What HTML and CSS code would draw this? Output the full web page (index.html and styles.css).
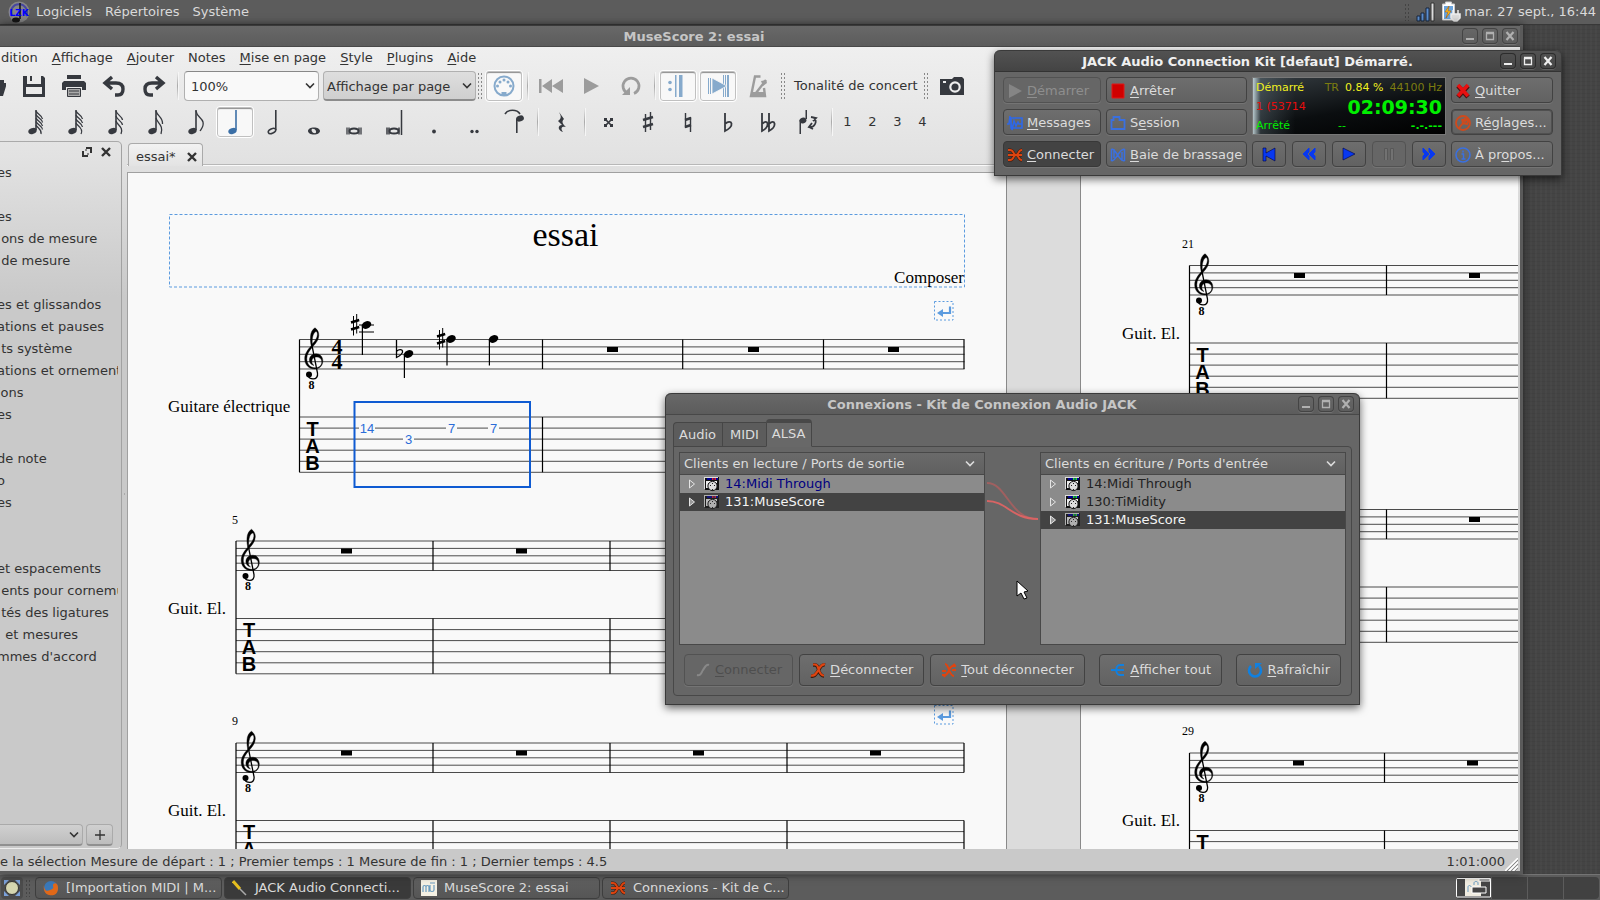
FILE: index.html
```html
<!DOCTYPE html>
<html lang="fr">

<head>
	<meta charset="UTF-8">
	<meta name="viewport" content="width=device-width, initial-scale=1.0">
	<title>MuseScore 2: essai</title>
	<link rel="stylesheet" href="styles.css">
</head>

<body>
	<!-- icones partagees -->
	<svg class="sprite" aria-hidden="true">
		<symbol id="i-min" viewBox="0 0 16 16"><path d="M4 11h8" stroke="currentColor" stroke-width="2" /></symbol>
		<symbol id="i-max" viewBox="0 0 16 16"><path d="M4.5 5.5h7v6h-7zM4 4.5h8" fill="none" stroke="currentColor" stroke-width="1.3" /></symbol>
		<symbol id="i-close" viewBox="0 0 16 16"><path d="M4.5 4l7 8M11.5 4l-7 8" fill="none" stroke="currentColor" stroke-width="2.2" /></symbol>
		<symbol id="i-down" viewBox="0 0 10 10"><path d="M1 2.5l4 4 4-4" fill="none" stroke="currentColor" stroke-width="1.6" /></symbol>
		<symbol id="i-head" viewBox="0 0 24 28"><ellipse cx="8.5" cy="23" rx="4.3" ry="2.9" transform="rotate(-20 8.5 23)" /><path d="M11.2 2h1.6v20h-1.6z" /></symbol>
		<symbol id="i-break" viewBox="0 0 20 20"><rect x=".5" y=".5" width="18.5" height="18.5" fill="none" stroke="#5b9bdf" stroke-dasharray="2 2" /><path d="M16 5.5v6.5H9" fill="none" stroke="#5b9bdf" stroke-width="2.2" /><path d="M3 12l6-4v8z" fill="#5b9bdf" /></symbol>
		<symbol id="i-alsa-out" viewBox="0 0 16 16"><path d="M1 1h14v13H1z" fill="#111" /><path d="M1 1h13v1H1v11H0V1z" fill="#ddd" /><path d="M3 2h11v2H3z" fill="#000090" /><path d="M8 2h1.500v2H8zM10.500 2H12v2h-1.500z" fill="#e02020" /><path d="M2 5h11v2H2zM2 7h2v5H2z" fill="#eee" /><circle cx="8.500" cy="10" r="4.600" fill="#ddd" stroke="#111" /><path d="M6 9h1v1H6zM8 7h1v1H8zM10 9h1v1h-1zM8 13h1v2H8z" fill="#222" /></symbol>
		<symbol id="i-alsa-in" viewBox="0 0 16 16"><path d="M1 1h14v13H1z" fill="#111" /><path d="M1 1h13v1H1v11H0V1z" fill="#ddd" /><path d="M3 2h11v2H3z" fill="#000090" /><path d="M8 2h1.500v2H8zM10.500 2H12v2h-1.500z" fill="#20e020" /><path d="M2 5h11v2H2zM2 7h2v5H2z" fill="#eee" /><circle cx="8.500" cy="10" r="4.600" fill="#ddd" stroke="#111" /><path d="M6 9h1v1H6zM8 7h1v1H8zM10 9h1v1h-1zM8 13h1v2H8z" fill="#222" /></symbol>
		<symbol id="i-x" viewBox="0 0 16 16"><path d="M1 14c4 1 5-2 7-5s3-7 7-6M3 3h2c3 0 3 3 4 6s2 5 5 5" fill="none" stroke="#3a1a0c" stroke-width="3.4" /><path d="M1 13.500c4 1 5-2 7-5s3-7 7-6M3 2.500h2c3 0 3 3 4 6s2 5 5 5" fill="none" stroke="#e04410" stroke-width="2.200" /></symbol>
		<symbol id="i-jack" viewBox="0 0 16 16"><path d="M1 3h2c4 0 3 5 6 5h6M1 13h2c4 0 3-5 6-5M1 8h8c3 0 2-5 6-5M9 8c3 0 2 5 6 5" fill="none" stroke="#40180a" stroke-width="3" /><path d="M1 3h2c4 0 3 5 6 5h6M1 13h2c4 0 3-5 6-5M1 8h8c3 0 2-5 6-5M9 8c3 0 2 5 6 5" fill="none" stroke="#dd4410" stroke-width="1.8" /></symbol>
	</svg>

	<header class="panel panel-top">
		<svg class="logo" width="22" height="22" viewBox="0 0 22 22">
			<circle cx="11" cy="11" r="10.5" fill="#858585" />
			<path d="M4 15A8 8 0 1 1 18 15" fill="none" stroke="#4646a0" stroke-width="2" />
			<path d="M12 2v16" stroke="#111" stroke-width="1.5" />
			<ellipse cx="8" cy="19" rx="4" ry="2.5" fill="#111" />
			<text x="11" y="15" class="logo-text">LZK</text>
		</svg>
		<nav class="panel-menu">
			<a href="#">Logiciels</a>
			<a href="#">Répertoires</a>
			<a href="#">Système</a>
		</nav>
		<span class="grip"></span>
		<svg class="tray" width="19" height="22" viewBox="0 0 19 22">
			<path d="M1 15h3v5H1zM5 12h3v8H5zM10 7h3v13h-3z" fill="#5d8fd0" stroke="#16243c" />
			<path d="M15 2h3v18h-3z" fill="#ddd" stroke="#333" />
		</svg>
		<svg class="tray" width="20" height="22" viewBox="0 0 20 22">
			<path d="M1.5 3h3V1h6v2h3v16h-12z" fill="#fff" stroke="#ccc" />
			<path d="M3 5h9v13H3z" fill="#6aa3dc" />
			<path d="M8 5l-4 6h3l-2 6 5-7H7z" fill="#ffc020" stroke="#b06000" stroke-width=".6" />
			<path d="M12 9v4M17 9v4M10 13h9v4l-3 3h-3l-3-3z" fill="#ddd" stroke="#eee" stroke-width="1.5" />
		</svg>
		<time class="clock">mar. 27 sept., 16:44</time>
	</header>

	<main class="desktop">
		<section class="musescore">
			<div class="title-bar">
				<h1 class="title">MuseScore 2: essai</h1>
				<div class="win-btns">
					<button aria-label="Réduire"><svg><use href="#i-min" /></svg></button>
					<button aria-label="Agrandir"><svg><use href="#i-max" /></svg></button>
					<button aria-label="Fermer"><svg><use href="#i-close" /></svg></button>
				</div>
			</div>
			<div class="app">
				<nav class="menu">
					<a href="#">dition</a>
					<a href="#"><u>A</u>ffichage</a>
					<a href="#"><u>A</u>jouter</a>
					<a href="#">Notes</a>
					<a href="#"><u>M</u>ise en page</a>
					<a href="#"><u>S</u>tyle</a>
					<a href="#"><u>P</u>lugins</a>
					<a href="#"><u>A</u>ide</a>
				</nav>

				<div class="toolbar toolbar-file">
					<button class="tool" aria-label="Ouvrir"><svg width="24" height="24" viewBox="0 0 24 24"><path d="M1 3h8l2 3h11v3h3l-4 13H1z" /></svg></button>
					<button class="tool" aria-label="Enregistrer"><svg width="24" height="24" viewBox="0 0 24 24"><path d="M1 2h4v8h14V2h2l2 2v19H1zM4 13v7h16v-7z" fill-rule="evenodd" /><path d="M8 2h2v5H8z" /></svg></button>
					<button class="tool" aria-label="Imprimer"><svg width="24" height="24" viewBox="0 0 24 24"><path d="M5 1h14v4H5zM2 7h20l2 2v7h-4v-3H4v3H0V9z" /><path d="M5.5 14.5h13v8h-13z" fill="#aaa" stroke="#36393f" /><path d="M7 17h10M7 20h10" stroke="#36393f" /></svg></button>
					<button class="tool" aria-label="Annuler"><svg width="24" height="24" viewBox="0 0 24 24"><path d="M10 3L3 9l7 6M4 9h10c5 0 7 2 7 6s-2 6-5 6h-3" fill="none" stroke="#36393f" stroke-width="3.4" /></svg></button>
					<button class="tool" aria-label="Refaire"><svg width="24" height="24" viewBox="0 0 24 24"><path d="M14 3l7 6-7 6M20 9H10c-5 0-7 2-7 6s2 6 5 6h3" fill="none" stroke="#36393f" stroke-width="3.4" /></svg></button>
					<span class="sep"></span>
					<label class="combo combo-zoom"><select aria-label="Zoom"><option>100%</option></select><svg><use href="#i-down" /></svg></label>
					<label class="combo combo-view"><select aria-label="Affichage"><option>Affichage par page</option></select><svg><use href="#i-down" /></svg></label>
					<span class="handle"></span>
					<button class="tool on" aria-label="Entrée MIDI"><svg width="24" height="24" viewBox="0 0 24 24" fill="#86aacc"><circle cx="12" cy="12" r="9.5" fill="none" stroke="#86aacc" stroke-width="2" /><circle cx="5.5" cy="12" r="1.5" /><circle cx="8" cy="8" r="1.5" /><circle cx="12" cy="6" r="1.5" /><circle cx="16" cy="8" r="1.5" /><circle cx="18.5" cy="12" r="1.5" /><path d="M9.5 18h5v4h-5z" /></svg></button>
					<span class="sep"></span>
					<button class="tool off" aria-label="Début"><svg width="24" height="24" viewBox="0 0 24 24"><path d="M0 5h2.5v14H0zM13 5v14L3 12zM24 5v14l-11-7z" /></svg></button>
					<button class="tool off" aria-label="Lecture"><svg width="24" height="24" viewBox="0 0 24 24"><path d="M5 4l15 8-15 8z" /></svg></button>
					<button class="tool off" aria-label="Boucle"><svg width="24" height="24" viewBox="0 0 24 24"><path d="M9 19.5a8 8 0 1 1 6 0" fill="none" stroke="#9c9c9c" stroke-width="2.8" /><path d="M3 21h8v-8z" /></svg></button>
					<span class="sep"></span>
					<button class="tool on" aria-label="Reprises"><svg width="24" height="24" viewBox="0 0 24 24" fill="#86aacc"><path d="M9 1h1.5v22H9zM13 1h3.5v22H13z" /><circle cx="4" cy="8.5" r="1.8" /><circle cx="4" cy="15.5" r="1.8" /></svg></button>
					<button class="tool on" aria-label="Défilement"><svg width="24" height="24" viewBox="0 0 24 24" fill="#86aacc"><path d="M2 4h1v16H2zM4 4h1v16H4zM17 1h1v22h-1zM19 1h1v22h-1zM21 1h2v22h-2z" /><path d="M6 4l15 8-15 8z" stroke="#f8f8f8" stroke-width=".8" /></svg></button>
					<button class="tool off" aria-label="Métronome"><svg width="24" height="24" viewBox="0 0 24 24"><path d="M14.5 2.5H9L5 22h14l-1-8M10 19l10-13" fill="none" stroke="#9c9c9c" stroke-width="2.4" /><path d="M15 7l5-1 1 3-4 3zM6 18h12v4H6z" /></svg></button>
					<span class="handle handle-wide"></span>
					<button class="tool-text">Tonalité de concert</button>
					<span class="handle handle-wide"></span>
					<button class="tool" aria-label="Capture"><svg width="24" height="20" viewBox="0 0 24 20"><path d="M1 3h11l2-2h8l2 2v16H0V3z" /><circle cx="15" cy="11" r="4.7" fill="none" stroke="#eee" stroke-width="2.2" /><path d="M3 5h3v2H3z" fill="#eee" /></svg></button>
				</div>

				<div class="toolbar toolbar-notes">
					<button class="tool" aria-label="Quintuple croche"><svg class="note" viewBox="0 0 24 28"><use href="#i-head" /><path class="flag" d="M12 3c1 3 6 4 6.500 8M12 6.500c1 3 6 4 6.500 8M12 10c1 3 6 4 6.500 8M12 13.500c1 3 6 4 6.500 8M12 17c1 3 6 4 5 9" /></svg></button>
					<button class="tool" aria-label="Quadruple croche"><svg class="note" viewBox="0 0 24 28"><use href="#i-head" /><path class="flag" d="M12 3c1 3 6 4 6.500 8M12 7c1 3 6 4 6.500 8M12 11c1 3 6 4 6.500 8M12 15c1 3 8 5 5 11" /></svg></button>
					<button class="tool" aria-label="Triple croche"><svg class="note" viewBox="0 0 24 28"><use href="#i-head" /><path class="flag" d="M12 3c1 4 6 5 6.500 9M12 8c1 4 6 5 6.500 9M12 13c1 4 8 6 5 13" /></svg></button>
					<button class="tool" aria-label="Double croche"><svg class="note" viewBox="0 0 24 28"><use href="#i-head" /><path class="flag" d="M12 3c1 5 7 6 6.500 13M12 10c1 5 8 7 5 16" /></svg></button>
					<button class="tool" aria-label="Croche"><svg class="note" viewBox="0 0 24 28"><use href="#i-head" /><path class="flag" d="M12 3c1 6 6 7 7 11s-1 6-3 9" /></svg></button>
					<button class="tool on blue" aria-label="Noire"><svg class="note" viewBox="0 0 24 28"><use href="#i-head" x="1" /></svg></button>
					<button class="tool" aria-label="Blanche"><svg class="note" viewBox="0 0 24 28"><ellipse cx="10" cy="23" rx="4" ry="2.2" transform="rotate(-25 10 23)" fill="none" stroke="#36393f" stroke-width="1.5" /><path d="M13 2h1.600v20H13z" /></svg></button>
					<button class="tool" aria-label="Ronde"><svg class="note" viewBox="0 0 24 28"><path fill-rule="evenodd" d="M12 19.500c3.500 0 6 1.600 6 3.500s-2.500 3.500-6 3.500-6-1.600-6-3.500 2.500-3.500 6-3.500zm-1.500 1.200c-2 .6-.5 4.500 2.500 4.500 2.500-.6.5-4.800-2.500-4.500z" /></svg></button>
					<button class="tool" aria-label="Brève"><svg class="note" viewBox="0 0 24 28"><ellipse cx="12" cy="23" rx="4.5" ry="2.6" fill="none" stroke="#36393f" stroke-width="2" /><path d="M5 19.500v7M7 19.500v7M17 19.500v7M19 19.500v7" stroke="#36393f" stroke-width="1.3" /></svg></button>
					<button class="tool" aria-label="Longue"><svg class="note" viewBox="0 0 24 28"><ellipse cx="12" cy="23" rx="4.5" ry="2.6" fill="none" stroke="#36393f" stroke-width="2" /><path d="M5 19.500v7M7 19.500v7M17 19.500v7M19.500 2v25" stroke="#36393f" stroke-width="1.5" /></svg></button>
					<button class="tool" aria-label="Point"><svg class="note" viewBox="0 0 24 28"><circle cx="12" cy="23.5" r="1.9" /></svg></button>
					<button class="tool" aria-label="Double point"><svg class="note" viewBox="0 0 24 28"><circle cx="10" cy="23.5" r="1.7" /><circle cx="15" cy="23.5" r="1.7" /></svg></button>
					<button class="tool" aria-label="Liaison"><svg class="note" viewBox="0 0 24 28"><path d="M3 6c3-5 12-5 15 0" fill="none" stroke="#36393f" stroke-width="1.6" /><ellipse cx="18" cy="10.5" rx="4" ry="2.9" transform="rotate(-20 18 10.500)" /><path d="M14 11h1.600v14H14z" /></svg></button>
					<span class="sep"></span>
					<button class="tool" aria-label="Silence"><svg class="note" viewBox="0 0 24 28"><path d="M10 4l5 7c-3 3-1 5 2 8-4-1-6 1-3 5-6-2-5-7-1-7l-4-4c4-3 3-5 1-9z" /></svg></button>
					<span class="sep"></span>
					<button class="tool" aria-label="Double dièse"><svg class="note" viewBox="0 0 24 28"><path d="M9 11l7 7M16 11l-7 7" stroke="#36393f" stroke-width="1.7" /><path d="M8 10h3v3H8zM14 10h3v3h-3zM8 16h3v3H8zM14 16h3v3h-3z" /></svg></button>
					<button class="tool" aria-label="Dièse"><svg class="note" viewBox="0 0 24 28"><path d="M9.500 6v18M14.500 4v18" stroke="#36393f" stroke-width="1.4" /><path d="M7 12l10-3M7 19l10-3" stroke="#36393f" stroke-width="2.6" /></svg></button>
					<button class="tool" aria-label="Bécarre"><svg class="note" viewBox="0 0 24 28"><path d="M9.500 5v15M14.500 9v15" stroke="#36393f" stroke-width="1.4" /><path d="M9 12l6-2M9 19l6-2" stroke="#36393f" stroke-width="2.6" /></svg></button>
					<button class="tool" aria-label="Bémol"><svg class="note" viewBox="0 0 24 28"><path d="M9 5v18c4-2 7-4 6.500-7.500-.5-2.500-4-2-6 0" fill="none" stroke="#36393f" stroke-width="1.8" /></svg></button>
					<button class="tool" aria-label="Double bémol"><svg class="note" viewBox="0 0 24 28"><path d="M6 5v18c4-2 6-4 5.500-7.500-.5-2.500-3-2-5 0M13 5v18c4-2 6-4 5.500-7.500-.5-2.500-3-2-5 0" fill="none" stroke="#36393f" stroke-width="1.8" /></svg></button>
					<button class="tool" aria-label="Inverser"><svg class="note" viewBox="0 0 24 28"><ellipse cx="7" cy="12.5" rx="3.5" ry="2.8" transform="rotate(-20 7 12.500)" /><path d="M3.500 12H5v14H3.500zM9.500 2H11v9H9.500z" /><path d="M15 9l5 1-3 3M18 10c4 4 0 10-5 9l3-4M13 19l4 2" fill="none" stroke="#36393f" stroke-width="1.8" /></svg></button>
					<span class="sep"></span>
					<button class="voice">1</button>
					<button class="voice">2</button>
					<button class="voice">3</button>
					<button class="voice">4</button>
				</div>

				<div class="work">
					<aside class="palettes">
						<div class="dock-head">
							<button aria-label="Détacher"><svg viewBox="0 0 10 10"><path d="M4 1h5v5M1 4v5h5" fill="none" stroke="currentColor" stroke-width="2" /><path d="M3 3h2M5 7h2" stroke="currentColor" /></svg></button>
							<button aria-label="Fermer les palettes"><svg viewBox="0 0 10 10"><path d="M1 1l8 8M9 1L1 9" stroke="currentColor" stroke-width="2.4" /></svg></button>
						</div>
						<ul class="palette-list">
							<li>es</li>
							<li></li>
							<li>es</li>
							<li>&nbsp;ons de mesure</li>
							<li>&nbsp;de mesure</li>
							<li></li>
							<li>es et glissandos</li>
							<li>ations et pauses</li>
							<li>&nbsp;ts système</li>
							<li>ations et ornement</li>
							<li>ions</li>
							<li>es</li>
							<li></li>
							<li>de note</li>
							<li>o</li>
							<li>es</li>
							<li></li>
							<li></li>
							<li>et espacements</li>
							<li>&nbsp;ents pour cornemu</li>
							<li>&nbsp;tés des ligatures</li>
							<li>&nbsp;&nbsp;et mesures</li>
							<li>mmes d'accord</li>
						</ul>
						<div class="dock-foot">
							<label class="combo combo-space"><select aria-label="Espace de travail"><option></option></select><svg><use href="#i-down" /></svg></label>
							<button class="add" aria-label="Ajouter un espace"><svg viewBox="0 0 10 10"><path d="M5 0v10M0 5h10" stroke="currentColor" stroke-width="1.3" /></svg></button>
						</div>
					</aside>
					<div class="splitter"></div>
					<div class="document">
						<div class="doc-tabs">
							<div class="doc-tab">essai*<button aria-label="Fermer essai"><svg viewBox="0 0 10 10"><path d="M1 1l8 8M9 1L1 9" stroke="currentColor" stroke-width="2.4" /></svg></button></div>
						</div>
						<div class="canvas">
							<svg class="score" width="1390" height="676" viewBox="128 173 1390 676">
								<defs>
									<path id="staff" d="M0 0h728M0 7.4h728M0 14.8h728M0 22.2h728M0 29.5h728M0 77.5h728M0 88.6h728M0 99.6h728M0 110.7h728M0 121.8h728M0 132.8h728" />
									<path id="bar" d="M0 0v29.5M0 77.5v55.3" />
									<path id="rest" d="M-5.5 7.5h11v5h-11z" />
									<g id="clef">
										<path d="M0 0v132.8" class="bar" />
										<g transform="translate(5 -12)">
											<path fill-rule="evenodd" stroke="#000" stroke-width=".4" d="M10.500.3C13 2 14.500 5 14.300 8c-.3 5-3.300 8-6.300 11.500C4.500 23.500 2.300 27 2.300 31c0 5.500 3.200 9.300 8.200 9.300 4 0 6.800-2.300 6.800-5.800 0-3.200-2.300-5-5.300-5s-4.700 2-4.700 4.300c0 1.700.7 3.200 2.200 4.200-3-.7-4.600-2.700-4.600-5.500 0-3.500 2.900-6.300 6.600-6.300 4.100 0 6.800 3 6.800 7.100 0 5-3.300 8.200-8 8.200C4 41.500.2 37 .2 31.200.2 26 3.500 22 6.700 18.300 6 15 5.800 12 6 9c.2-4 1.800-7 4.500-8.700zM11.500 4C9 5 7.300 9.500 7.800 16.500c2.700-3 5-6 5.100-9.200C13 5.500 12.500 4 11.500 4z" />
											<path d="M7.300 17L13 45.500c.6 4-1.500 6-4.500 5.900-2 0-3.800-.8-4.500-2.400" fill="none" stroke="#000" stroke-width="1.3" />
											<circle cx="4.5" cy="47" r="3" />
										</g>
										<text x="12" y="49" class="eight">8</text>
										<g class="tab-letters"><text x="13" y="96">T</text><text x="13" y="113">A</text><text x="13" y="130">B</text></g>
									</g>
									<g id="sharp"><path d="M2.500 2v19.500M5.700 0v19.500" stroke="#000" /><path d="M0 8.500l8.200-2.500M0 15.500L8.200 13" stroke="#000" stroke-width="2.4" /></g>
									<ellipse id="notehead" rx="5" ry="3.6" />
								</defs>

								<rect x="120" y="160" width="886.5" height="700" class="page" />
								<rect x="1080.5" y="160" width="500" height="700" class="page" />

								<!-- cadre du titre -->
								<rect x="169.5" y="214.5" width="795" height="72.5" class="frame" />
								<text x="565.5" y="246" class="score-title">essai</text>
								<text x="964" y="283" class="composer">Composer</text>
								<use href="#i-break" x="934" y="301" width="20" height="20" />
								<use href="#i-break" x="934" y="705" width="20" height="20" />

								<!-- page 1 -->
								<path class="line" d="M299.5 339.5h665m-665 7.4h665m-665 7.4h665m-665 7.4h665m-665 7.3h665M299.5 417h665m-665 11.1h665m-665 11h665m-665 11.1h665m-665 11.1h665m-665 11h665" />
								<use href="#clef" x="299.5" y="339.5" />
								<g class="timesig"><text x="337" y="354">4</text><text x="337" y="369">4</text></g>
								<g class="bar">
									<use href="#bar" x="542.5" y="339.5" /><use href="#bar" x="682.7" y="339.5" /><use href="#bar" x="823.5" y="339.5" /><use href="#bar" x="964" y="339.5" />
									<path d="M359 325h15M359 332h15M362.400 325v30M404.400 354v24M447 340v25.500M489.400 340v25.500" />
								</g>
								<use href="#notehead" transform="translate(366.5 325) rotate(-25)" />
								<use href="#notehead" transform="translate(408.5 354) rotate(-25)" />
								<use href="#notehead" transform="translate(451 339) rotate(-25)" />
								<use href="#notehead" transform="translate(493.5 339) rotate(-25)" />
								<use href="#sharp" x="351" y="314" /><use href="#sharp" x="437" y="328" />
								<path d="M396.500 340v17.500c4-2 6.500-4.500 6-6.500s-4-1.500-5.500 0" fill="none" stroke="#000" stroke-width="1.3" />
								<use href="#rest" x="612.5" y="339.5" /><use href="#rest" x="753.5" y="339.5" /><use href="#rest" x="893.5" y="339.5" />
								<path d="M359 423h16v10h-16zM403 434h11v10h-11zM446 423h11v10h-11zM488 423h11v10h-11z" fill="#f9f9f9" />
								<g class="frets"><text x="367" y="433">14</text><text x="408.5" y="444">3</text><text x="451.5" y="433">7</text><text x="493.5" y="433">7</text></g>
								<rect x="354.5" y="402" width="175.5" height="85" class="selection" />
								<text x="168" y="412" class="part">Guitare électrique</text>

								<use href="#staff" x="236" y="541" class="line" /><use href="#clef" x="236" y="541" />
								<g class="bar"><use href="#bar" x="433" y="541" /><use href="#bar" x="610" y="541" /><use href="#bar" x="787" y="541" /><use href="#bar" x="964" y="541" /></g>
								<use href="#rest" x="346.5" y="541" /><use href="#rest" x="521.5" y="541" />
								<text x="232" y="524" class="number">5</text>
								<text x="168" y="614" class="part">Guit. El.</text>

								<use href="#staff" x="236" y="743" class="line" /><use href="#clef" x="236" y="743" />
								<g class="bar"><use href="#bar" x="433" y="743" /><use href="#bar" x="610" y="743" /><use href="#bar" x="787" y="743" /><use href="#bar" x="964" y="743" /></g>
								<use href="#rest" x="346.5" y="743" /><use href="#rest" x="521.5" y="743" /><use href="#rest" x="698.5" y="743" /><use href="#rest" x="875.5" y="743" />
								<text x="232" y="725" class="number">9</text>
								<text x="168" y="816" class="part">Guit. El.</text>

								<!-- page 2 -->
								<use href="#staff" x="1189.5" y="265.5" class="line" /><use href="#clef" x="1189.5" y="265.5" />
								<use href="#bar" x="1386.5" y="265.5" class="bar" />
								<use href="#rest" x="1299.5" y="265.5" /><use href="#rest" x="1474.5" y="265.5" />
								<text x="1182" y="248" class="number">21</text>
								<text x="1122" y="339" class="part">Guit. El.</text>

								<use href="#staff" x="1189.5" y="509.5" class="line" />
								<use href="#bar" x="1386.5" y="509.5" class="bar" />
								<use href="#rest" x="1474.5" y="509.5" />

								<use href="#staff" x="1189.5" y="753" class="line" /><use href="#clef" x="1189.5" y="753" />
								<use href="#bar" x="1384.5" y="753" class="bar" />
								<use href="#rest" x="1298.5" y="753" /><use href="#rest" x="1472.5" y="753" />
								<text x="1182" y="735" class="number">29</text>
								<text x="1122" y="826" class="part">Guit. El.</text>
							</svg>
						</div>
					</div>
				</div>

				<footer class="status">
					<span>e la sélection Mesure de départ : 1 ; Premier temps : 1 Mesure de fin : 1 ; Dernier temps : 4.5</span>
					<span class="position">1:01:000</span>
					<svg class="resize" width="13" height="13" viewBox="0 0 13 13"><path d="M0 13L13 0M4 13l9-9M8 13l5-5" stroke="#fff" stroke-width="1.5" /><path d="M2 13L13 2M6 13l7-7M10 13l3-3" stroke="#888" /></svg>
				</footer>
			</div>
		</section>

		<section class="window jack">
			<div class="title-bar active">
				<h2 class="title">JACK Audio Connection Kit [defaut] Démarré.</h2>
				<div class="win-btns">
					<button aria-label="Réduire"><svg><use href="#i-min" /></svg></button>
					<button aria-label="Agrandir"><svg><use href="#i-max" /></svg></button>
					<button aria-label="Fermer"><svg><use href="#i-close" /></svg></button>
				</div>
			</div>
			<div class="jack-grid">
				<button class="btn" disabled><svg viewBox="0 0 16 16"><path d="M2 1l13 7-13 7z" fill="#858585" /></svg><span><u>D</u>émarrer</span></button>
				<button class="btn"><svg viewBox="0 0 16 16"><path d="M2 1h12v14H2z" fill="#d00000" stroke="#e01818" /></svg><span><u>A</u>rrêter</span></button>
				<div class="display">
					<div class="display-row"><span class="yellow">Démarré</span><span class="dim push">TR</span><span class="yellow">0.84 %</span><span class="dim">44100 Hz</span></div>
					<div class="display-row"><span class="red">1 (53714</span><strong class="time push">02:09:30</strong></div>
					<div class="display-row"><span>Arrêté</span><span class="bbt">--</span><strong class="push">-.-.---</strong></div>
				</div>
				<button class="btn"><svg viewBox="0 0 16 16"><path d="M3 3l10 11M13 3L3 14" stroke="#4a1010" stroke-width="4.6" /><path d="M3 2l10 11M13 2L3 13" stroke="#e81010" stroke-width="3.6" /></svg><span><u>Q</u>uitter</span></button>

				<button class="btn"><svg viewBox="0 0 16 16"><path d="M4 3h11v10H4zM0 9h2l1-8 2 14 2-9 2 5 2-4 1 2h3" fill="none" stroke="#2e68e8" stroke-width="1.6" /></svg><span><u>M</u>essages</span></button>
				<button class="btn"><svg viewBox="0 0 16 16"><path d="M1.500 14V5h2V2h6v3h5v9z" fill="none" stroke="#3a70e0" stroke-width="1.8" /></svg><span>S<u>e</u>ssion</span></button>
				<button class="btn focus"><svg viewBox="0 0 16 16"><circle cx="8" cy="8" r="7" fill="none" stroke="#d04a1c" stroke-width="1.8" /><path d="M4 13l4-5M7 4l1 4 4 1c2-3 0-5 0-5l-2 2-1-1 1-2" fill="none" stroke="#d04a1c" stroke-width="2" /></svg><span>R<u>é</u>glages...</span></button>

				<button class="btn pressed"><svg><use href="#i-jack" /></svg><span><u>C</u>onnecter</span></button>
				<button class="btn"><svg viewBox="0 0 16 16"><path d="M1.500 2v12M14.500 2v12M1.500 2c5 0 7 12 13 12M1.500 14c5 0 7-12 13-12M4 2v9M12 5v9" fill="none" stroke="#3a70e0" stroke-width="1.5" /></svg><span><u>B</u>aie de brassage</span></button>
				<div class="transport">
					<button class="btn" aria-label="Retour"><svg viewBox="0 0 16 16"><path d="M2 2h3v5l9-5v13L5 10v5H2z" fill="#0838f0" stroke="#000040" stroke-width=".6" /></svg></button>
					<button class="btn" aria-label="Arrière"><svg viewBox="0 0 16 16"><path d="M8 2L2 8l6 6v-4L6 8l2-2zM14 2L8 8l6 6v-4l-2-2 2-2z" fill="#0838f0" stroke="#0838f0" /></svg></button>
					<button class="btn" aria-label="Jouer"><svg viewBox="0 0 16 16"><path d="M2 2l12 6-12 6z" fill="#0838f0" stroke="#000040" stroke-width=".6" /></svg></button>
					<button class="btn" aria-label="Pause" disabled><svg viewBox="0 0 16 16"><path d="M3.500 14V2.500h3V14M9.500 14V2.500h3V14" fill="#727272" stroke="#585858" /></svg></button>
					<button class="btn" aria-label="Avance"><svg viewBox="0 0 16 16"><path d="M2 2l6 6-6 6v-4l2-2-2-2zM8 2l6 6-6 6v-4l2-2-2-2z" fill="#0838f0" stroke="#0838f0" /></svg></button>
				</div>
				<button class="btn"><svg viewBox="0 0 16 16"><circle cx="8" cy="8" r="7" fill="none" stroke="#3a70e0" stroke-width="1.6" /><path d="M6.500 7h2v5M6.500 12h4M8 3.500v2" fill="none" stroke="#3a70e0" stroke-width="1.5" /></svg><span>À pr<u>o</u>pos...</span></button>
			</div>
		</section>

		<section class="window connections">
			<div class="title-bar">
				<h2 class="title">Connexions - Kit de Connexion Audio JACK</h2>
				<div class="win-btns">
					<button aria-label="Réduire"><svg><use href="#i-min" /></svg></button>
					<button aria-label="Agrandir"><svg><use href="#i-max" /></svg></button>
					<button aria-label="Fermer"><svg><use href="#i-close" /></svg></button>
				</div>
			</div>
			<div class="conn-body">
				<div class="tabs" role="tablist">
					<button class="tab" role="tab">Audio</button>
					<button class="tab" role="tab">MIDI</button>
					<button class="tab current" role="tab">ALSA</button>
				</div>
				<div class="pane">
					<div class="ports">
						<div class="tree">
							<div class="tree-head">Clients en lecture / Ports de sortie<svg><use href="#i-down" /></svg></div>
							<ul>
								<li class="linked"><svg class="arrow" viewBox="0 0 6 10"><path d="M.5 1l5 4-5 4z" /></svg><svg><use href="#i-alsa-out" /></svg>14:Midi Through</li>
								<li class="selected"><svg class="arrow" viewBox="0 0 6 10"><path d="M.5 1l5 4-5 4z" /></svg><svg><use href="#i-alsa-out" /></svg>131:MuseScore</li>
							</ul>
						</div>
						<svg class="wires" width="55" height="193" viewBox="0 0 55 193">
							<path d="M2 31c20 0 22 36 51 36" stroke="#a06060" />
							<path d="M2 49c20 0 24 18 51 18" stroke="#d86464" />
						</svg>
						<div class="tree">
							<div class="tree-head">Clients en écriture / Ports d'entrée<svg><use href="#i-down" /></svg></div>
							<ul>
								<li><svg class="arrow" viewBox="0 0 6 10"><path d="M.5 1l5 4-5 4z" /></svg><svg><use href="#i-alsa-in" /></svg>14:Midi Through</li>
								<li><svg class="arrow" viewBox="0 0 6 10"><path d="M.5 1l5 4-5 4z" /></svg><svg><use href="#i-alsa-in" /></svg>130:TiMidity</li>
								<li class="selected"><svg class="arrow" viewBox="0 0 6 10"><path d="M.5 1l5 4-5 4z" /></svg><svg><use href="#i-alsa-in" /></svg>131:MuseScore</li>
							</ul>
						</div>
					</div>
					<div class="actions">
						<button class="btn" disabled><svg viewBox="0 0 16 16"><path d="M2 13c4 1 4-2 6-5s3-6 6-5" fill="none" stroke="#888" stroke-width="2" /></svg><span><u>C</u>onnecter</span></button>
						<button class="btn"><svg><use href="#i-x" /></svg><span><u>D</u>éconnecter</span></button>
						<button class="btn"><svg viewBox="0 0 16 16"><path d="M1 13h3c4 0 4-9 8-9h3M1 9h4M4 2c4 0 4 12 9 12M11 8h4M3 15l4-5M9 6l5-4" fill="none" stroke="#e04410" stroke-width="2" /></svg><span><u>T</u>out déconnecter</span></button>
						<button class="btn apart"><svg viewBox="0 0 16 16"><path d="M1 8h13M14 3h-4C5 3 5 13 10 13h4" fill="none" stroke="#1080e0" stroke-width="2" /></svg><span><u>A</u>fficher tout</span></button>
						<button class="btn apart"><svg viewBox="0 0 16 16"><path d="M4 4a6 6 0 1 0 8 0" fill="none" stroke="#1080e0" stroke-width="2.6" /><path d="M8 1h7l-7 6z" fill="#1080e0" /></svg><span><u>R</u>afraîchir</span></button>
					</div>
				</div>
			</div>
		</section>

		<svg class="cursor" width="13" height="20" viewBox="0 0 13 20"><path d="M1 1v15l4-3 3 6 3-1-3-6 4-1z" fill="#fff" stroke="#000" /></svg>
	</main>

	<footer class="panel panel-bottom">
		<button class="show-desktop" aria-label="Bureau"><svg width="16" height="16" viewBox="0 0 16 16"><path d="M0 0h5L0 5zM16 0h-5l5 5zM0 16h5l-5-5zM16 16h-5l5-5z" fill="#7aa0d8" /><circle cx="8" cy="8" r="6.5" fill="#d5d6b0" stroke="#333" /></svg></button>
		<span class="grip"></span>
		<nav class="tasks">
			<button class="task"><svg viewBox="0 0 16 16"><circle cx="8" cy="8" r="7" fill="#3a78b8" /><path d="M1 5c0 7 4 6 6 5s4-1 3-4 5-5 5 2-5 8-9 7-6-5-5-10z" fill="#e06818" /></svg><span>[Importation MIDI | M...</span></button>
			<button class="task current"><svg viewBox="0 0 16 16"><path d="M1 1l7 8" stroke="#e8c020" stroke-width="3" /><path d="M8 9l6 6" stroke="#aaa" stroke-width="1.5" /></svg><span>JACK Audio Connecti...</span></button>
			<button class="task"><svg viewBox="0 0 16 16"><path d="M0 0h16v16H0z" fill="#f5f1e4" /><path d="M2 12V7c0-2 3-2 3 0v5M5 7c0-2 3-2 3 0v5M9 5v5c0 2 4 2 4 0V5M9 3h5" fill="none" stroke="#6a9cc0" stroke-width="1.2" /></svg><span>MuseScore 2: essai</span></button>
			<button class="task"><svg><use href="#i-jack" /></svg><span>Connexions - Kit de C...</span></button>
		</nav>
		<div class="pager">
			<button aria-label="Bureau 1"><svg width="35" height="20" viewBox="0 0 35 20"><path d="M.5.5h34v18.500H.5z" fill="#454545" stroke="#fff" /><path d="M9 1h16v17H9z" fill="#f0ece0" /><path d="M12 14V9c0-2 3-2 3 0M18 7V5c0-2 4-2 4 0v2" fill="none" stroke="#6a9cc0" /><path d="M23 1h11v2H23zM16 9h14v6H16z" fill="#444" stroke="#fff" /></svg></button>
			<button aria-label="Bureau 2"></button>
			<button aria-label="Bureau 3"></button>
			<button aria-label="Bureau 4"></button>
		</div>
	</footer>
</body>

</html>
```

FILE: styles.css
```css
* {
	margin: 0;
	padding: 0;
	box-sizing: border-box;
}

body {
	display: flex;
	flex-direction: column;
	height: 100vh;
	overflow: hidden;
	font: 13px/16px "DejaVu Sans", sans-serif;
	color: #333;
	background: #414141;
}

button,
select {
	font: inherit;
	color: inherit;
	border: none;
	background: none;
}

a {
	color: inherit;
	text-decoration: none;
}

u {
	text-underline-offset: 2px;
}

ul {
	list-style: none;
}

svg {
	display: block;
	flex: none;
}

.sprite {
	position: absolute;
	width: 0;
	height: 0;
}

/* panneaux */
.panel {
	flex: none;
	display: flex;
	align-items: center;
	color: #dadada;
	background: #5c5c5c;
}

.panel-top {
	height: 25px;
	padding: 0 4px 1px 8px;
	border-bottom: 1px solid #383838;
}

.logo-text {
	font: bold 9px "DejaVu Sans", sans-serif;
	fill: #0000ff;
	text-anchor: middle;
}

.panel-menu {
	display: flex;
	flex: 1;
	gap: 13px;
	margin-left: 6px;
}

.grip,
.handle {
	width: 6px;
	height: 18px;
	background: radial-gradient(circle, #444 1px, transparent 1px) 0 0 / 3px 4px;
}

.tray {
	margin-left: 6px;
}

.clock {
	margin-left: 3px;
}

.desktop {
	position: relative;
	flex: 1;
	min-height: 0;
	background: repeating-linear-gradient(90deg, rgba(255, 255, 255, .02) 0 2px, transparent 2px 5px), repeating-linear-gradient(rgba(0, 0, 0, .05) 0 1px, transparent 1px 4px), #444;
}

/* barre de titre */
.title-bar {
	display: flex;
	flex: none;
	align-items: center;
	height: 22px;
	padding-right: 5px;
	color: #c6c6c6;
	background: linear-gradient(#686868, #5c5c5c);
	border-top: 1px solid #3a3a3a;
	border-bottom: 1px solid #484848;
}

.title-bar.active {
	color: #f0f0f0;
	background: linear-gradient(#525252, #444);
	border-bottom-color: #333;
}

.title {
	flex: 1;
	padding-top: 2px;
	font-size: 13px;
	text-align: center;
}

.win-btns {
	display: flex;
	gap: 4px;
}

.win-btns button {
	width: 16px;
	height: 16px;
	border-radius: 4px;
	color: #b0b0b0;
	box-shadow: 0 0 0 1px #444 inset, 0 1px 0 #747474;
}

.active .win-btns button {
	color: #eee;
	box-shadow: 0 0 0 1px #2c2c2c inset, 0 1px 0 #606060;
}

.win-btns svg {
	width: 16px;
	height: 16px;
}

/* MuseScore */
.musescore {
	display: flex;
	flex-direction: column;
	height: 100%;
	margin-right: 77px;
	border-right: 3px solid #5a5a5a;
	border-bottom: 3px solid #5a5a5a;
	box-shadow: 0 0 8px #222;
}

.musescore > .title-bar {
	padding-right: 2px;
}

.musescore > .title-bar .title {
	padding-right: 74px;
}

.app {
	display: flex;
	flex: 1;
	flex-direction: column;
	min-height: 0;
	padding-right: 2px;
	background: linear-gradient(#efefef, #e2e2e2 110px, #c9c9c9 250px);
}

.menu {
	display: flex;
	gap: 14px;
	height: 23px;
	padding: 3px 0 0 1px;
}

.toolbar {
	display: flex;
	align-items: center;
	height: 32px;
	margin-bottom: 4px;
}

.toolbar-file {
	margin-left: -26px;
}

.toolbar-notes {
	padding-left: 16px;
	margin-bottom: 0;
}

.tool {
	display: flex;
	flex: none;
	align-items: center;
	justify-content: center;
	width: 38px;
	height: 32px;
	margin: 0 1px;
	fill: #36393f;
}

.tool.off {
	fill: #9c9c9c;
}

.tool.on {
	background: #f8f8f8;
	border: 1px solid #fff;
	border-radius: 4px;
	box-shadow: 0 0 0 1px #c0c0c0 inset, 0 2px 1px #8c8c8c inset;
}

.tool.blue {
	margin: 0;
	fill: #3b6fa6;
}

.note {
	width: 24px;
	height: 28px;
}

.flag {
	fill: none;
	stroke: #36393f;
	stroke-width: 1.3;
}

.sep {
	flex: none;
	width: 1px;
	height: 28px;
	margin: 0 3px;
	background: linear-gradient(transparent, #aaa, transparent);
	box-shadow: 1px 0 0 #f6f6f6;
}

.toolbar .handle {
	flex: none;
	height: 28px;
	margin: 0 1px;
	background: radial-gradient(circle, #888 1px, transparent 1px) 0 0 / 3px 4px;
}

.toolbar .handle-wide {
	margin: 0 3px 0 2px;
}

.tool-text {
	padding: 0 3px 0 5px;
}

.voice {
	width: 25px;
}

.combo {
	display: grid;
	align-items: center;
	color: #333;
}

.combo select,
.combo svg {
	grid-area: 1 / 1;
}

.combo select {
	height: 30px;
	width: 100%;
	padding: 2px 6px 0;
	appearance: none;
	border: 1px solid #b0b0b0;
	border-radius: 4px;
}

.combo svg {
	width: 10px;
	height: 10px;
	margin-right: 4px;
	justify-self: end;
	pointer-events: none;
}

.combo-zoom {
	width: 135px;
	margin: 0 4px 0 3px;
}

.combo-zoom select {
	background: #f9f9f9;
	border-top-color: #888;
}

.combo-view {
	width: 153px;
}

.combo-view select {
	padding: 2px 3px 0;
	background: linear-gradient(#dedede, #cfcfcf);
	border-bottom: 2px solid #8c8c8c;
}

.work {
	display: flex;
	flex: 1;
	min-height: 0;
}

.palettes {
	display: flex;
	flex-direction: column;
	flex: none;
	width: 122px;
	margin-top: 3px;
	border-top: 1px solid #aaa;
	border-right: 1px solid #a2a2a2;
	border-bottom: 1px solid #eee;
	border-radius: 0 5px 5px 0;
}

.dock-head {
	display: flex;
	justify-content: flex-end;
	gap: 9px;
	height: 20px;
	padding-right: 10px;
}

.dock-head svg,
.doc-tab svg,
.add svg {
	width: 10px;
	height: 10px;
}

.palette-list {
	flex: 1;
	min-height: 0;
	margin: 0 3px 0 -3px;
	overflow: hidden;
	white-space: nowrap;
}

.palette-list li {
	height: 22px;
	line-height: 22px;
}

.dock-foot {
	display: flex;
	gap: 3px;
	padding: 0 8px 2px 0;
}

.combo-space {
	flex: 1;
}

.combo-space select,
.add {
	height: 22px;
	background: linear-gradient(#d0d0d0, #bdbdbd);
	border: 1px solid #aaa;
	border-bottom: 2px solid #909090;
	border-radius: 4px;
}

.combo-space select {
	border-left: none;
	border-radius: 0 4px 4px 0;
}

.add {
	width: 27px;
	padding-left: 8px;
}

.splitter {
	flex: none;
	width: 5px;
	background: radial-gradient(circle, #aaa 1px, transparent 1px) center / 3px 4px no-repeat;
}

.document {
	display: flex;
	flex: 1;
	flex-direction: column;
	min-width: 0;
}

.doc-tabs {
	height: 28px;
	padding: 5px 0 0 1px;
	margin-bottom: 6px;
	border-bottom: 1px solid #fafafa;
	box-shadow: 0 -1px 0 #b8b8b8 inset;
}

.doc-tab {
	display: flex;
	align-items: center;
	gap: 11px;
	width: 75px;
	height: 23px;
	padding: 3px 0 0 7px;
	background: linear-gradient(#f2f2f2, #e3e3e3);
	border: 1px solid #aaa;
	border-bottom: none;
	border-radius: 4px 4px 0 0;
}

.canvas {
	flex: 1;
	min-height: 0;
	overflow: hidden;
	background: #dcdcdc;
	border: solid #a0a0a0;
	border-width: 1px 0 0 1px;
}

.status {
	display: flex;
	flex: none;
	align-items: center;
	height: 22px;
	padding-top: 3px;
	white-space: nowrap;
}

.status .position {
	margin-left: auto;
}

.resize {
	align-self: flex-end;
}

/* partition */
.page {
	fill: #f9f9f9;
	stroke: #8a8a8a;
}

.frame {
	fill: none;
	stroke: #5b9bdf;
	stroke-dasharray: 3 2;
}

.line {
	stroke: #000;
	stroke-width: .7;
}

.bar {
	fill: none;
	stroke: #000;
	stroke-width: 1.2;
}

.score text {
	font-family: "Liberation Serif", serif;
}

.score .score-title {
	font-size: 34px;
	text-anchor: middle;
}

.composer,
.part {
	font-size: 17px;
}

.composer {
	text-anchor: end;
}

.number {
	font-size: 12px;
}

.eight {
	font-size: 12px;
	font-weight: bold;
	text-anchor: middle;
}

.timesig {
	font-size: 22px;
	font-weight: bold;
	text-anchor: middle;
}

.score .tab-letters text,
.score .frets text {
	font-family: "Liberation Sans", sans-serif;
	text-anchor: middle;
}

.tab-letters {
	font-size: 20px;
	font-weight: bold;
}

.frets {
	font-size: 13px;
	fill: #2b6cd8;
}

.selection {
	fill: none;
	stroke: #0f5bd2;
	stroke-width: 2;
}

/* fenetres flottantes */
.window {
	position: absolute;
	display: flex;
	flex-direction: column;
	color: #dcdcdc;
	background: #666;
	border: 1px solid #3a3a3a;
	border-top: none;
	border-radius: 6px 6px 0 0;
	box-shadow: 0 3px 9px rgba(0, 0, 0, .6);
}

.window > .title-bar {
	border-radius: 6px 6px 0 0;
}

.btn {
	display: flex;
	align-items: center;
	gap: 4px;
	padding: 1px 4px 0 3px;
	white-space: nowrap;
	background: linear-gradient(#6e6e6e, #626262);
	border: 1px solid #424242;
	border-radius: 4px;
	box-shadow: 0 1px 0 #747474;
}

.btn svg {
	width: 16px;
	height: 16px;
}

.btn:disabled {
	color: #8e8e8e;
	background: #666;
	border-color: #525252;
}

.jack {
	top: 25px;
	left: 994px;
	width: 568px;
}

.jack-grid {
	display: grid;
	grid-template-columns: 98px 141px 1fr 102px;
	grid-auto-rows: 26px;
	gap: 6px 5px;
	padding: 5px 8px 8px;
}

.btn.pressed {
	background: #434343;
	border-color: #383838;
}

.btn.focus {
	box-shadow: 0 0 0 1px #505050 inset;
}

.display {
	display: flex;
	flex-direction: column;
	justify-content: space-between;
	grid-row: span 2;
	padding: 2px 3px 0;
	font-size: 11px;
	color: #00f000;
	background: linear-gradient(90deg, rgba(220, 240, 245, .8), rgba(120, 140, 150, .3) 4%, transparent 22%), linear-gradient(170deg, #343b40, #0b0e10 55%, #000);
	border: 1px solid #777;
}

.display-row {
	display: flex;
	align-items: center;
	gap: 6px;
	height: 16px;
}

.push {
	margin-left: auto;
}

.yellow {
	color: #f0f020;
}

.dim {
	color: #7c7c10;
}

.red {
	color: #e80c0c;
}

.time {
	font-size: 19px;
}

.bbt {
	margin-left: 42px;
}

.transport {
	display: grid;
	grid-template-columns: repeat(5, 1fr);
	gap: 6px;
}

.transport .btn {
	justify-content: center;
	padding: 0;
}

.connections {
	top: 368px;
	left: 665px;
	width: 695px;
}

.conn-body {
	padding: 4px 7px 8px;
}

.tabs {
	display: flex;
	align-items: flex-end;
	position: relative;
	margin-bottom: -1px;
}

.tab {
	height: 25px;
	padding: 0 6px 0 5px;
	background: #5c5c5c;
	border: 1px solid #464646;
	border-right: none;
	border-radius: 4px 0 0 0;
}

.tab.current {
	height: 28px;
	padding-bottom: 2px;
	background: #686868;
	border-top: 4px solid #484848;
	border-right: 1px solid #464646;
	border-bottom-color: #686868;
	border-radius: 4px 4px 0 0;
}

.tab:nth-child(2) {
	padding: 0 7px;
	border-radius: 0;
}

.pane {
	padding: 5px 5px 9px;
	border: 1px solid #484848;
	border-radius: 0 4px 4px 4px;
}

.ports {
	display: grid;
	grid-template-columns: 1fr 55px 1fr;
}

.wires path {
	fill: none;
	stroke-width: 2;
}

.tree {
	height: 193px;
	background: #8b8b8b;
	border: 1px solid #484848;
}

.tree-head {
	display: flex;
	align-items: center;
	justify-content: space-between;
	height: 22px;
	padding: 0 9px 0 4px;
	background: linear-gradient(#6a6a6a, #606060);
	border-bottom: 1px solid #484848;
}

.tree-head svg {
	width: 10px;
	height: 10px;
}

.tree li {
	display: flex;
	align-items: center;
	height: 18px;
	padding-left: 9px;
	color: #222;
}

.tree li svg {
	width: 16px;
	height: 16px;
	margin: 0 5px 0 9px;
}

.tree li .arrow {
	width: 6px;
	height: 10px;
	margin: 0;
	fill: none;
	stroke: #e4e4e4;
}

.tree .linked {
	color: #000080;
}

.tree .selected {
	color: #f4f4f4;
	background: #434343;
}

.selected svg {
	opacity: .7;
}

.tree .selected .arrow {
	opacity: 1;
	fill: #999;
}

.actions {
	display: flex;
	gap: 6px;
	margin-top: 9px;
	padding: 0 5px;
}

.actions .btn {
	height: 32px;
	padding: 0 10px;
}

.actions .btn:disabled {
	color: #4e4e4e;
}

.actions .apart {
	margin-left: auto;
}

.cursor {
	position: absolute;
	top: 555px;
	left: 1016px;
}

/* barre des taches */
.panel-bottom {
	height: 26px;
	padding: 2px 1px 1px;
	border-top: 1px solid #747474;
}

.show-desktop {
	padding: 3px;
	background: #4c4c4c;
	border-radius: 4px;
}

.panel-bottom .grip {
	margin: 0 4px 0 2px;
}

.tasks {
	display: flex;
	flex: 1;
	gap: 2px;
}

.task {
	display: flex;
	align-items: center;
	gap: 7px;
	width: 187px;
	height: 22px;
	padding-left: 7px;
	background: linear-gradient(#606060, #565656);
	border: 1px solid #3e3e3e;
	border-radius: 4px;
}

.task.current {
	background: #3a3a3a;
}

.task svg {
	width: 16px;
	height: 16px;
}

.pager {
	display: flex;
	gap: 1px;
	height: 22px;
	background: #5c5c5c;
	border-radius: 4px;
	overflow: hidden;
}

.pager button {
	width: 35px;
	background: #414141;
}
```
